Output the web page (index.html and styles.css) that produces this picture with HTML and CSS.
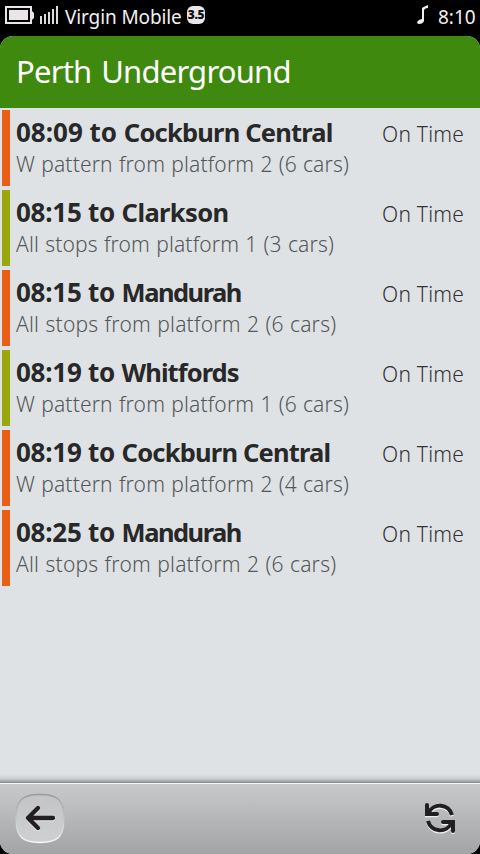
FILE: index.html
```html
<!DOCTYPE html>
<html lang="en">
<head>
<meta charset="utf-8">
<title>Perth Underground</title>
<link rel="stylesheet" href="styles.css">
</head>
<body>
<div class="status">
  <svg class="battery" width="30" height="20" viewBox="0 0 30 20"><path d="M1 1h25v16H1z" fill="none" stroke="#e9e5e8" stroke-width="2"/><path d="M4 4h19v10H4zM27 5l2 2v5l-2 2z" fill="#e9e5e8"/></svg>
  <svg class="signal" width="18" height="18" viewBox="0 0 18 18"><path d="M0 10h2v8H0zM4 8h2v10H4zM8 6h2v12H8zM12 3h2v15h-2zM16 0h2v18h-2z" fill="#dedadd"/></svg>
  <span class="carrier">Virgin Mobile</span>
  <span class="badge">3.5</span>
  <svg class="note" width="12" height="20" viewBox="0 0 12 20"><path d="M5 3Q6 2 11 0V3Q8 3 7 5V16Q6 19 2 19Q-.5 19 .3 17Q1 15 5 14Z" fill="#eee"/></svg>
  <span class="clock">8:10</span>
</div>
<div class="app">
  <header class="header"><h1 class="title">Perth Underground</h1></header>
  <main class="list">
    <div class="row mandurah"><div class="info"><div class="dest">08:09 to <span class="name">Cockburn Central</span></div><div class="detail">W pattern from platform 2 (6 cars)</div></div><div class="state">On Time</div></div>
    <div class="row joondalup"><div class="info"><div class="dest teen">08:15 to <span class="name loose">Clarkson</span></div><div class="detail">All stops from platform 1 (3 cars)</div></div><div class="state">On Time</div></div>
    <div class="row mandurah"><div class="info"><div class="dest teen">08:15 to <span class="name tight">Mandurah</span></div><div class="detail wide">All stops from platform 2 (6 cars)</div></div><div class="state">On Time</div></div>
    <div class="row joondalup"><div class="info"><div class="dest teen">08:19 to <span class="name snug">Whitfords</span></div><div class="detail">W pattern from platform 1 (6 cars)</div></div><div class="state">On Time</div></div>
    <div class="row mandurah"><div class="info"><div class="dest teen">08:19 to <span class="name">Cockburn Central</span></div><div class="detail">W pattern from platform 2 (4 cars)</div></div><div class="state">On Time</div></div>
    <div class="row mandurah"><div class="info"><div class="dest teen">08:25 to <span class="name tight">Mandurah</span></div><div class="detail wide">All stops from platform 2 (6 cars)</div></div><div class="state">On Time</div></div>
  </main>
  <footer class="toolbar">
    <svg width="50" height="52" viewBox="0 0 50 52">
      <defs>
        <linearGradient id="face" x1="0" y1="0" x2="0" y2="1"><stop offset="0" stop-color="#c2c4c5"/><stop offset="1" stop-color="#cfd0d1"/></linearGradient>
        <linearGradient id="rim" x1="0" y1="0" x2="0" y2="1"><stop offset="0" stop-color="#999b9c"/><stop offset=".5" stop-color="#c2c4c5"/><stop offset="1" stop-color="#fafafa"/></linearGradient>
      </defs>
      <path d="M25 2.5C43 2.5 49 8.5 49 26.5S43 50.5 25 50.5S1 44.5 1 26.5S7 2.5 25 2.5Z" fill="url(#face)" stroke="url(#rim)" stroke-width="1.3"/>
      <path d="M38 26H13M23 16L13 26L23 36" transform="translate(0 1)" fill="none" stroke="#eee" stroke-width="4.3" stroke-linecap="round" stroke-linejoin="round"/>
      <path d="M38 26H13M23 16L13 26L23 36" fill="none" stroke="#231f20" stroke-width="4.3" stroke-linecap="round" stroke-linejoin="round"/>
    </svg>
    <svg width="32" height="34" viewBox="0 0 32 34">
      <defs><g id="arrow" fill="none" stroke-width="4" stroke-linecap="round"><path d="M3 4V13H13"/><path d="M4.500 12A12.500 12.500 0 0 1 28 14" stroke-linecap="butt"/></g>
      <g id="sync"><use href="#arrow"/><use href="#arrow" transform="rotate(180 16 17)"/></g></defs>
      <use href="#sync" stroke="#eee" y="1.3"/><use href="#sync" stroke="#231f20"/>
    </svg>
  </footer>
</div>
</body>
</html>
```
FILE: styles.css
```css
body {
  margin: 0;
  width: 480px;
  height: 854px;
  overflow: hidden;
  display: flex;
  flex-direction: column;
  background: #000;
  font-family: "Noto Sans", sans-serif;
}
.status {
  height: 36px;
  box-sizing: border-box;
  padding: 0 4px 0 5px;
  display: flex;
  align-items: flex-start;
  color: #f2f0f2;
  font-size: 19px;
  line-height: 34px;
  white-space: nowrap;
}
.battery { margin-top: 6px; }
.signal { margin: 6px 7px 0 5px; }
.carrier { width: 122px; letter-spacing: -0.12px; }
.badge {
  width: 18px;
  height: 18px;
  margin-top: 6px;
  border-radius: 6px;
  background: #e9e5e8;
  color: #111;
  font-size: 12px;
  font-weight: 900;
  line-height: 18px;
  letter-spacing: -0.4px;
  text-align: center;
}
.note { margin: 5px 9px 0 auto; }
.clock { width: 38px; }
.app {
  flex: 1;
  display: flex;
  flex-direction: column;
  overflow: hidden;
  border-radius: 13px;
  background: #dee2e5;
}
.header {
  height: 72px;
  padding-left: 16px;
  background: #40890f;
}
.title {
  margin: 0;
  color: #fff;
  font-size: 31px;
  font-weight: 400;
  line-height: 71px;
  letter-spacing: -0.8px;
  word-spacing: 2.6px;
  white-space: nowrap;
}
.list {
  flex: 1;
  padding: 2px 16px 0 2px;
  display: flex;
  flex-direction: column;
  gap: 4px;
  background: linear-gradient(#dee2e5 calc(100% - 8px), #c9cccf calc(100% - 4px), #858788);
}
.row {
  height: 76px;
  box-sizing: border-box;
  border-left: 8px solid;
  padding-left: 6px;
  display: flex;
  justify-content: space-between;
  white-space: nowrap;
}
.mandurah { border-color: #e95f18; }
.joondalup { border-color: #98a70b; }
.dest {
  height: 38px;
  color: #282828;
  font-size: 26px;
  font-weight: 700;
  line-height: 45px;
}
.teen { letter-spacing: -0.25px; }
.name {
  font-size: 25.5px;
  letter-spacing: -0.8px;
}
.loose { letter-spacing: -0.6px; }
.snug { letter-spacing: -0.95px; }
.tight { letter-spacing: -1.5px; }
.detail {
  color: #555657;
  font-size: 21px;
  font-weight: 300;
  line-height: 33px;
  letter-spacing: 0.16px;
  word-spacing: 0.5px;
}
.wide { letter-spacing: 0.23px; }
.state {
  color: #333;
  font-size: 21px;
  font-weight: 300;
  line-height: 49px;
  letter-spacing: 0.2px;
}
.toolbar {
  height: 71px;
  box-sizing: border-box;
  border-top: 1px solid #f4f4f4;
  padding: 0 24px 2px 15px;
  display: flex;
  align-items: center;
  justify-content: space-between;
  background: linear-gradient(#c7c9ca, #a2a4a5);
}
```
